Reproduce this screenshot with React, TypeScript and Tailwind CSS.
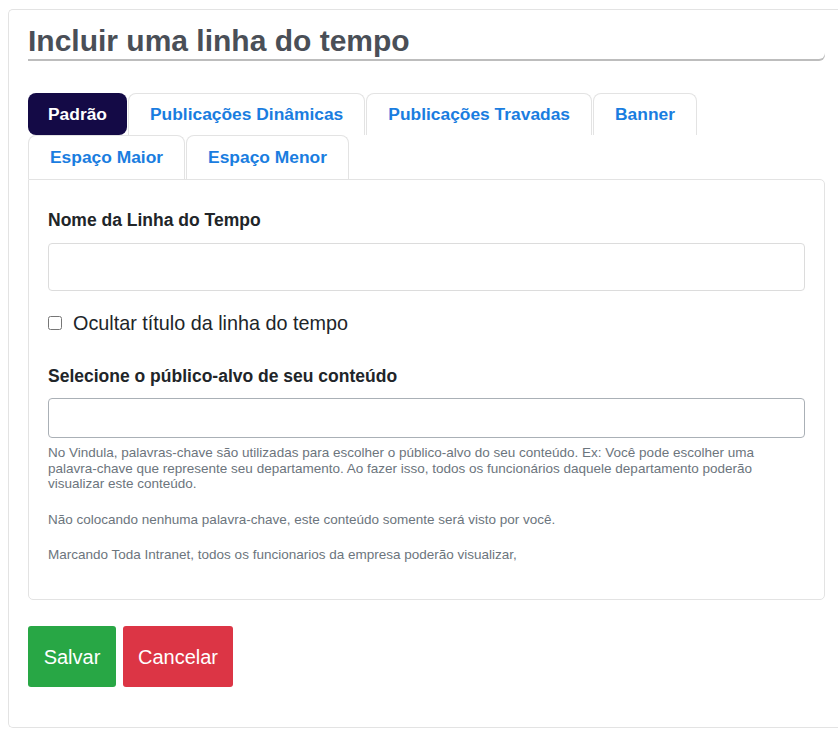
import { useState } from "react";

const tabs = [
  "Padrão",
  "Publicações Dinâmicas",
  "Publicações Travadas",
  "Banner",
  "Espaço Maior",
  "Espaço Menor",
];

export default function App() {
  const [active, setActive] = useState("Padrão");
  const [nome, setNome] = useState("");
  const [publico, setPublico] = useState("");
  const [ocultar, setOcultar] = useState(false);

  return (
    <main
      className="min-h-screen bg-white pt-[9px] pl-[8px] pb-[5px]"
      style={{ fontFamily: '"Liberation Sans", Arial, sans-serif' }}
    >
      {/* cartão */}
      <div className="h-[719px] rounded-l-[5px] border border-r-0 border-[#e3e3e3] pl-[19px] pr-[13px] pt-[13px]">
        {/* título */}
        <h1 className="rounded-br-[6px] text-[30px] font-bold leading-[36px] text-[#4a4f57] shadow-[0_2px_0_#bdbdbd]">
          Incluir uma linha do tempo
        </h1>

        {/* abas */}
        <div className="mt-[34px] flex w-[680px] flex-wrap">
          {tabs.map((t) => (
            <button
              key={t}
              onClick={() => setActive(t)}
              className={`mr-px h-[42px] rounded-t-[8px] text-[17.4px] font-bold ${
                active === t
                  ? "rounded-b-[8px] bg-[#140a46] px-[20px] text-white"
                  : "border border-b-0 border-[#e3e3e3] bg-white px-[21px] text-[#1a7de0]"
              } ${t === "Espaço Maior" || t === "Espaço Menor" ? "h-[44px]" : ""}`}
            >
              {t}
            </button>
          ))}
        </div>

        {/* painel */}
        <div className="h-[421px] rounded-b-[5px] rounded-tr-[5px] border border-[#e3e3e3] px-[19px] pt-[29px]">
          <label className="block text-[17.5px] font-bold leading-[22px] text-[#212529]">
            Nome da Linha do Tempo
          </label>
          <input
            type="text"
            value={nome}
            onChange={(e) => setNome(e.target.value)}
            className="mt-[12px] block h-[48px] w-full rounded-[4px] border border-[#dcdcdc] px-3 outline-none"
          />

          <label className="mt-[20px] flex items-center gap-[11px] text-[19.8px] leading-[24px] text-[#212529]">
            <input
              type="checkbox"
              checked={ocultar}
              onChange={(e) => setOcultar(e.target.checked)}
              className="h-[14px] w-[14px]"
            />
            Ocultar título da linha do tempo
          </label>

          <label className="mt-[30px] block text-[17.5px] font-bold leading-[22px] text-[#212529]">
            Selecione o público-alvo de seu conteúdo
          </label>
          <input
            type="text"
            value={publico}
            onChange={(e) => setPublico(e.target.value)}
            className="mt-[11px] block h-[40px] w-full rounded-[4px] border border-[#aab0b6] px-3 outline-none"
          />

          <div className="mt-[7px] text-[13.5px] leading-[15.5px] text-[#6c757d]">
            <p>
              No Vindula, palavras-chave são utilizadas para escolher o
              público-alvo do seu conteúdo. Ex: Você pode escolher uma
              palavra-chave que represente seu departamento. Ao fazer isso,
              todos os funcionários daquele departamento poderão visualizar este
              conteúdo.
            </p>
            <p className="mt-[20px]">
              Não colocando nenhuma palavra-chave, este conteúdo somente será
              visto por você.
            </p>
            <p className="mt-[20px]">
              Marcando Toda Intranet, todos os funcionarios da empresa poderão
              visualizar,
            </p>
          </div>
        </div>

        {/* botões */}
        <div className="mt-[26px] flex gap-[7px]">
          <button className="h-[61px] w-[88px] rounded-[3px] bg-[#28a745] text-[20px] text-white">
            Salvar
          </button>
          <button className="h-[61px] w-[110px] rounded-[3px] bg-[#dc3545] text-[20px] text-white">
            Cancelar
          </button>
        </div>
      </div>
    </main>
  );
}
